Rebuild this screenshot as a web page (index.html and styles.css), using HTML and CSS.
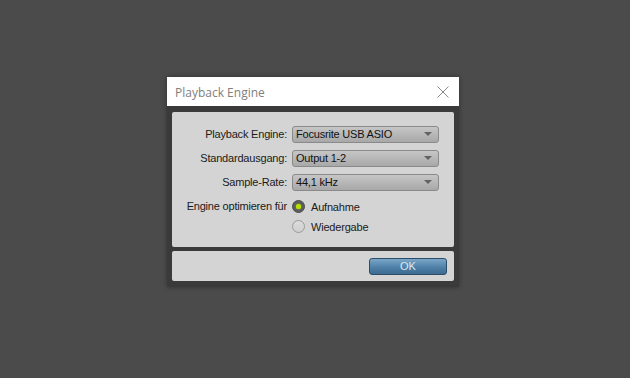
FILE: index.html
```html
<!DOCTYPE html>
<html>
<head>
<meta charset="utf-8">
<link rel="stylesheet" href="styles.css">
</head>
<body>
<div class="stage">
  <div class="dialog">
    <div class="titlebar">
      <span class="title">Playback Engine</span>
      <svg class="close" width="12" height="12" viewBox="0 0 12 12"><path d="M0.5 0.5 L11.5 11.5 M11.5 0.5 L0.5 11.5" stroke="#8a8a8a" stroke-width="1" fill="none"/></svg>
    </div>
    <div class="body">
      <div class="panel main">
        <div class="form">
          <div class="label">Playback Engine:</div>
          <div class="select">Focusrite USB ASIO<span class="arrow"></span></div>
          <div class="label">Standardausgang:</div>
          <div class="select">Output 1-2<span class="arrow"></span></div>
          <div class="label">Sample-Rate:</div>
          <div class="select">44,1 kHz<span class="arrow"></span></div>
          <div class="label opt">Engine optimieren für</div>
          <div class="radios">
            <div class="radio-row"><span class="radio on"></span><span>Aufnahme</span></div>
            <div class="radio-row"><span class="radio"></span><span>Wiedergabe</span></div>
          </div>
        </div>
      </div>
      <div class="panel foot">
        <button class="ok">OK</button>
      </div>
    </div>
  </div>
</div>
</body>
</html>
```

FILE: styles.css
```css
html, body {
  margin: 0;
  padding: 0;
  background: #4b4b4b;
  width: 630px;
  height: 378px;
  overflow: hidden;
}
.stage {
  padding: 77px 0 0 167px;
}
.dialog {
  width: 292px;
  height: 210px;
  background: #3a3a3a;
  box-shadow: 0 0 5px rgba(0,0,0,0.35);
  display: flex;
  flex-direction: column;
}
.titlebar {
  height: 29px;
  background: #ffffff;
  display: flex;
  align-items: center;
  justify-content: space-between;
  padding: 0 10px 0 8px;
}
.title {
  font-family: "Open Sans", "Noto Sans", sans-serif;
  font-size: 12px;
  color: #808080;
  padding-top: 1px;
}
.close {
  display: block;
  margin-top: 1px;
}
.body {
  flex: 1;
  padding: 6px 5px 6px 5px;
  display: flex;
  flex-direction: column;
  gap: 4px;
}
.panel {
  background: #d4d4d4;
  border-radius: 2px;
}
.main {
  height: 135px;
  box-sizing: border-box;
  padding: 14px 15px 0 0;
}
.foot {
  height: 30px;
  display: flex;
  justify-content: flex-end;
  align-items: center;
  padding-right: 7px;
}
.form {
  display: grid;
  grid-template-columns: 115px 147px;
  grid-auto-rows: 17px;
  column-gap: 5px;
  row-gap: 7px;
  font-family: "Liberation Sans", Arial, sans-serif;
  font-size: 11px;
  letter-spacing: -0.2px;
  color: #1a1a1a;
}
.label {
  text-align: right;
  line-height: 17px;
}
.select {
  position: relative;
  box-sizing: border-box;
  height: 17px;
  border: 1px solid #8a8a8a;
  border-radius: 3px;
  background: linear-gradient(#c6c6c6, #a8a8a8);
  line-height: 15px;
  padding-left: 3px;
  color: #111;
}
.arrow {
  position: absolute;
  right: 6px;
  top: 5px;
  width: 0;
  height: 0;
  border-left: 4px solid transparent;
  border-right: 4px solid transparent;
  border-top: 4px solid #626262;
}
.radios {
  grid-row: span 2;
  display: flex;
  flex-direction: column;
  gap: 7px;
  margin-top: 2px;
}
.radio-row {
  display: flex;
  align-items: center;
  height: 13px;
  gap: 6px;
}
.radio {
  width: 13px;
  height: 13px;
  box-sizing: border-box;
  border-radius: 50%;
  border: 1px solid #9a9a9a;
  background: linear-gradient(#dcdcdc, #cfcfcf);
  display: flex;
  align-items: center;
  justify-content: center;
}
.radio.on {
  border: 1px solid #4a4a4a;
  background: #5e5e5e;
}
.radio.on::after {
  content: "";
  width: 5px;
  height: 5px;
  border-radius: 50%;
  background: #b5e000;
  box-shadow: 0 0 1px #c8ff00;
}
.ok {
  width: 78px;
  height: 17px;
  box-sizing: border-box;
  border: 1px solid #2b4c69;
  border-radius: 3px;
  background: linear-gradient(#7aa6c8, #4f81a8 55%, #3d6a90);
  color: #dce8f2;
  font-family: "Liberation Sans", Arial, sans-serif;
  font-size: 11px;
  padding: 0;
  line-height: 15px;
}
```
